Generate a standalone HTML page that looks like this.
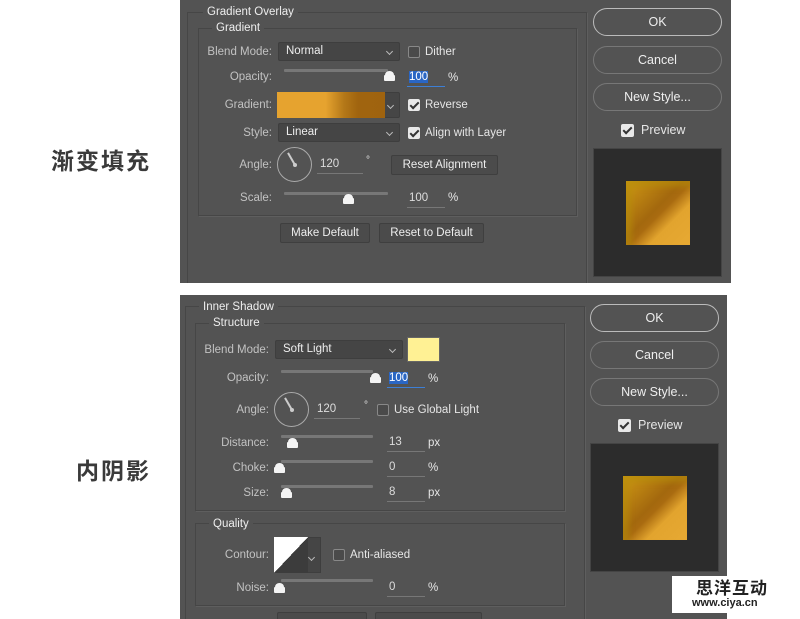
<!DOCTYPE html>
<html><head><meta charset="utf-8"><style>
*{margin:0;padding:0;box-sizing:border-box}
body{width:800px;height:619px;background:#fff;position:relative;overflow:hidden;font-family:"Liberation Sans","Noto Sans CJK SC",sans-serif}
.p{position:absolute;background:#535353;overflow:hidden}
.a{position:absolute}
.t{position:absolute;font-size:11.5px;color:#e6e6e6;white-space:nowrap;line-height:14px}
.l{position:absolute;font-size:11.5px;color:#c2c2c2;white-space:nowrap;line-height:14px;text-align:right}
.g{position:absolute;border:1px solid #464646;box-shadow:1px 1px 0 #5e5e5e}
.gt{position:absolute;font-size:11.5px;color:#eee;background:#535353;padding:0 4px;line-height:14px}
.dd{position:absolute;background:#454545;border:1px solid #3e3e3e;border-radius:2px;color:#eee;font-size:11.5px;padding-left:7px;line-height:17px}
.dd:after,.chev:after{content:"";position:absolute;right:7px;top:6px;width:4px;height:4px;border:solid #bbb;border-width:0 1px 1px 0;transform:rotate(45deg)}
.chev{position:absolute}
.cb{position:absolute;width:12px;height:12px;border:1px solid #888;border-radius:2px;background:#4a4a4a}
.cb.on{background:#e8e8e8;border-color:#e8e8e8}
.cb.on:after{content:"";position:absolute;left:3px;top:0px;width:3px;height:7px;border:solid #333;border-width:0 2px 2px 0;transform:rotate(45deg)}
.tr{position:absolute;height:3px;background:#777;border-radius:1px}
.th{position:absolute;width:11px;height:10px}
.th:before{content:"";position:absolute;left:0;top:4px;width:11px;height:6px;background:#f4f4f4;border-radius:1px}
.th:after{content:"";position:absolute;left:1px;top:0;width:9px;height:8px;background:#f4f4f4;border-radius:50% 50% 0 0}
.in{position:absolute;border-bottom:1px solid #777;font-size:11.5px;color:#ddd;padding-left:2px;line-height:15px;height:17px}
.bt{position:absolute;background:#4b4b4b;border:1px solid #3f3f3f;border-radius:2px;color:#eee;font-size:11.5px;text-align:center;line-height:18px}
.rb{position:absolute;border:1px solid #777;border-radius:14px;color:#eee;font-size:12.5px;text-align:center;line-height:26px;width:129px;height:28px}
.rb.ok{border-color:#bbb}
.dial{position:absolute;width:35px;height:35px;border:1px solid #aaa;border-radius:50%}
.dial:after{content:"";position:absolute;left:16px;top:3px;width:2px;height:14px;background:#ccc;transform:rotate(-30deg);transform-origin:50% 100%}
.dial:before{content:"";position:absolute;left:15px;top:15px;width:4px;height:4px;background:#ccc;border-radius:50%}
.pv{position:absolute;background:#2c2c2c;border:1px solid #444}
.sq{position:absolute;width:64px;height:64px;background:linear-gradient(135deg,#d09a15 0%,#a3680e 45%,#a96b10 52%,#e2a42e 68%,#e7a933 100%);box-shadow:inset 6px 6px 6px rgba(180,140,10,.6)}
.cn{position:absolute;font-family:"Noto Sans CJK SC",sans-serif;font-weight:bold;font-size:23px;color:#3a3a3a;letter-spacing:2px}
</style></head><body>

<div class="cn" style="left:51px;top:142px">渐变填充</div>
<div class="cn" style="left:76px;top:452px">内阴影</div>

<!-- TOP PANEL -->
<div class="p" style="left:180px;top:0;width:551px;height:283px">
  <div class="g" style="left:7px;top:12px;width:400px;height:290px"></div>
  <div class="gt" style="left:23px;top:5px">Gradient Overlay</div>
  <div class="g" style="left:18px;top:28px;width:379px;height:188px"></div>
  <div class="gt" style="left:32px;top:21px">Gradient</div>

  <div class="l" style="left:0;width:92px;top:45px">Blend Mode:</div>
  <div class="dd" style="left:98px;top:42px;width:122px;height:19px">Normal</div>
  <div class="cb" style="left:228px;top:46px"></div>
  <div class="t" style="left:245px;top:45px">Dither</div>

  <div class="l" style="left:0;width:92px;top:70px">Opacity:</div>
  <div class="tr" style="left:104px;top:69px;width:104px"></div>
  <div class="th" style="left:204px;top:71px"></div>
  <div class="in" style="left:227px;top:70px;width:38px;border-color:#3d7fd6"><span style="background:#2a66c4;color:#fff">100</span></div>
  <div class="t" style="left:268px;top:71px">%</div>

  <div class="l" style="left:0;width:92px;top:98px">Gradient:</div>
  <div class="a" style="left:97px;top:92px;width:123px;height:26px;background:#464646;border:1px solid #3e3e3e;border-radius:2px"></div>
  <div class="a" style="left:97px;top:92px;width:108px;height:26px;background:linear-gradient(90deg,#e6a32f 0%,#e6a32f 45%,#b47818 62%,#a0640f 75%,#9f630f 100%)"></div>
  <div class="chev" style="left:205px;top:97px;width:15px;height:14px"></div>
  <div class="cb on" style="left:228px;top:99px"></div>
  <div class="t" style="left:245px;top:98px">Reverse</div>

  <div class="l" style="left:0;width:92px;top:126px">Style:</div>
  <div class="dd" style="left:98px;top:123px;width:122px;height:19px">Linear</div>
  <div class="cb on" style="left:228px;top:127px"></div>
  <div class="t" style="left:245px;top:126px">Align with Layer</div>

  <div class="l" style="left:0;width:92px;top:158px">Angle:</div>
  <div class="dial" style="left:97px;top:147px"></div>
  <div class="in" style="left:137px;top:157px;width:46px;padding-left:3px">120</div>
  <div class="t" style="left:186px;top:154px;font-size:10px">°</div>
  <div class="bt" style="left:211px;top:155px;width:107px;height:20px">Reset Alignment</div>

  <div class="l" style="left:0;width:92px;top:191px">Scale:</div>
  <div class="tr" style="left:104px;top:192px;width:104px"></div>
  <div class="th" style="left:163px;top:194px"></div>
  <div class="in" style="left:227px;top:191px;width:38px;padding-left:2px">100</div>
  <div class="t" style="left:268px;top:191px">%</div>

  <div class="bt" style="left:100px;top:223px;width:90px;height:20px">Make Default</div>
  <div class="bt" style="left:199px;top:223px;width:105px;height:20px">Reset to Default</div>

  <div class="rb ok" style="left:413px;top:8px">OK</div>
  <div class="rb" style="left:413px;top:46px">Cancel</div>
  <div class="rb" style="left:413px;top:83px">New Style...</div>
  <div class="cb on" style="left:441px;top:124px;width:13px;height:13px"></div>
  <div class="t" style="left:461px;top:123px;font-size:12.5px">Preview</div>
  <div class="pv" style="left:413px;top:148px;width:129px;height:129px"></div>
  <div class="sq" style="left:446px;top:181px"></div>
</div>

<!-- BOTTOM PANEL -->
<div class="p" style="left:180px;top:295px;width:547px;height:324px">
  <div class="g" style="left:5px;top:11px;width:400px;height:330px"></div>
  <div class="gt" style="left:19px;top:5px">Inner Shadow</div>
  <div class="g" style="left:15px;top:28px;width:370px;height:188px"></div>
  <div class="gt" style="left:29px;top:21px">Structure</div>

  <div class="l" style="left:0;width:89px;top:48px">Blend Mode:</div>
  <div class="dd" style="left:95px;top:45px;width:128px;height:19px">Soft Light</div>
  <div class="a" style="left:227px;top:42px;width:33px;height:25px;background:#fff194;border:1px solid #666"></div>

  <div class="l" style="left:0;width:89px;top:76px">Opacity:</div>
  <div class="tr" style="left:101px;top:75px;width:92px"></div>
  <div class="th" style="left:190px;top:78px"></div>
  <div class="in" style="left:207px;top:76px;width:38px;border-color:#3d7fd6"><span style="background:#2a66c4;color:#fff">100</span></div>
  <div class="t" style="left:248px;top:77px">%</div>

  <div class="l" style="left:0;width:89px;top:108px">Angle:</div>
  <div class="dial" style="left:94px;top:97px"></div>
  <div class="in" style="left:134px;top:107px;width:46px;padding-left:3px">120</div>
  <div class="t" style="left:184px;top:104px;font-size:10px">°</div>
  <div class="cb" style="left:197px;top:109px"></div>
  <div class="t" style="left:214px;top:108px">Use Global Light</div>

  <div class="l" style="left:0;width:89px;top:141px">Distance:</div>
  <div class="tr" style="left:101px;top:140px;width:92px"></div>
  <div class="th" style="left:107px;top:143px"></div>
  <div class="in" style="left:207px;top:140px;width:38px">13</div>
  <div class="t" style="left:248px;top:141px">px</div>

  <div class="l" style="left:0;width:89px;top:166px">Choke:</div>
  <div class="tr" style="left:101px;top:165px;width:92px"></div>
  <div class="th" style="left:94px;top:168px"></div>
  <div class="in" style="left:207px;top:165px;width:38px">0</div>
  <div class="t" style="left:248px;top:166px">%</div>

  <div class="l" style="left:0;width:89px;top:191px">Size:</div>
  <div class="tr" style="left:101px;top:190px;width:92px"></div>
  <div class="th" style="left:101px;top:193px"></div>
  <div class="in" style="left:207px;top:190px;width:38px">8</div>
  <div class="t" style="left:248px;top:191px">px</div>

  <div class="g" style="left:15px;top:228px;width:370px;height:83px"></div>
  <div class="gt" style="left:29px;top:222px">Quality</div>

  <div class="l" style="left:0;width:89px;top:253px">Contour:</div>
  <div class="a" style="left:94px;top:242px;width:47px;height:36px;background:#454545;border:1px solid #3e3e3e"></div>
  <div class="a" style="left:94px;top:242px;width:34px;height:36px;background:linear-gradient(to bottom right,#fff 50%,#3c3c3c 50%)"></div>
  <div class="chev" style="left:126px;top:254px;width:15px;height:14px"></div>
  <div class="cb" style="left:153px;top:254px"></div>
  <div class="t" style="left:170px;top:253px">Anti-aliased</div>

  <div class="l" style="left:0;width:89px;top:286px">Noise:</div>
  <div class="tr" style="left:101px;top:284px;width:92px"></div>
  <div class="th" style="left:94px;top:288px"></div>
  <div class="in" style="left:207px;top:285px;width:38px">0</div>
  <div class="t" style="left:248px;top:286px">%</div>

  <div class="bt" style="left:97px;top:317px;width:90px;height:20px"></div>
  <div class="bt" style="left:195px;top:317px;width:107px;height:20px"></div>

  <div class="rb ok" style="left:410px;top:9px">OK</div>
  <div class="rb" style="left:410px;top:46px">Cancel</div>
  <div class="rb" style="left:410px;top:83px">New Style...</div>
  <div class="cb on" style="left:438px;top:124px;width:13px;height:13px"></div>
  <div class="t" style="left:458px;top:123px;font-size:12.5px">Preview</div>
  <div class="pv" style="left:410px;top:148px;width:129px;height:129px"></div>
  <div class="sq" style="left:443px;top:181px"></div>
</div>

<!-- watermark -->
<div class="a" style="left:672px;top:576px;width:128px;height:37px;background:#fff"></div>
<div class="a" style="left:696px;top:577px;font-family:'Noto Sans CJK SC',sans-serif;font-weight:bold;font-size:17px;line-height:20px;color:#222;letter-spacing:1px">思洋互动</div>
<div class="a" style="left:692px;top:597px;font-family:'Liberation Sans',sans-serif;font-weight:bold;font-size:11px;line-height:13px;color:#222">www.ciya.cn</div>

</body></html>
